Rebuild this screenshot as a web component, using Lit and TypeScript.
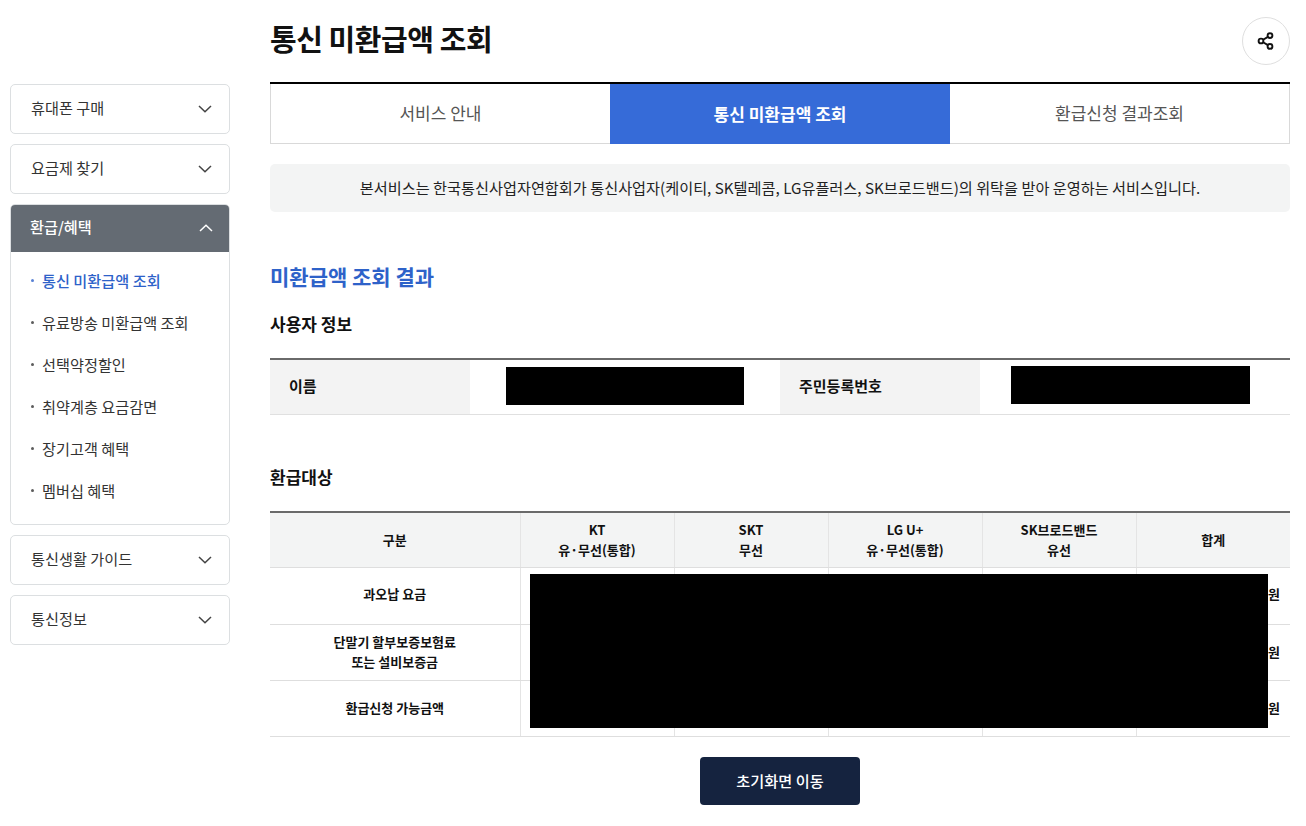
import { LitElement, html, css, svg } from "lit";
import { customElement } from "lit/decorators.js";

const chevron = (up = false) => html`<svg class="chev" width="14" height="8" viewBox="0 0 14 8" fill="none"><path d="${up ? "M1 7L7 1.2L13 7" : "M1 1L7 6.8L13 1"}" stroke="currentColor" stroke-width="1.5"/></svg>`;
const shareIcon = svg`<circle cx="5" cy="10" r="2.4"/><circle cx="14" cy="4.6" r="2.4"/><circle cx="14" cy="15.4" r="2.4"/><path d="M7.1 8.7L11.9 5.9M7.1 11.3L11.9 14.1"/>`;

@customElement("app-root")
export class AppRoot extends LitElement {
  static styles = css`
    :host { display: block; width: 1306px; height: 826px; overflow: hidden; background: #fff; color: #111; font-family: "Noto Sans CJK KR", "Noto Sans", sans-serif; }
    * { box-sizing: border-box; }
    .page { display: flex; align-items: flex-start; padding: 0 16px 0 10px; gap: 40px; }
    .side { width: 220px; flex: none; padding-top: 84px; display: flex; flex-direction: column; gap: 10px; }
    .item { height: 50px; border: 1px solid #dcdfe1; border-radius: 5px; display: flex; align-items: center; justify-content: space-between; padding: 0 17px 0 20px; font-size: 15.2px; color: #333; }
    .label { display: block; line-height: 22px; margin-top: -5px; }
    .chev { display: block; color: #444; }
    .open { border: 1px solid #dcdfe1; border-radius: 5px; height: 321px; overflow: hidden; }
    .open-h { height: 48px; margin: -1px -1px 0; background: #646b73; color: #fff; display: flex; align-items: center; justify-content: space-between; padding: 0 17px 0 20px; font-size: 15.2px; font-weight: 500; border-radius: 5px 5px 0 0; }
    .open-h .chev { color: #fff; }
    .open-h .label { margin-top: -4px; }
    .sub { list-style: none; margin: 0; padding: 7px 0 0 20px; }
    .sub li { height: 42px; display: flex; align-items: center; font-size: 15.2px; color: #333; gap: 8px; }
    .sub li::before { content: ""; width: 3px; height: 3px; border-radius: 50%; background: currentColor; flex: none; opacity: 0.8; }
    .sub li.on { color: #2e62c9; font-weight: 500; }
    .main { width: 1020px; flex: none; position: relative; }
    .head { height: 82px; display: flex; align-items: flex-start; justify-content: space-between; }
    h1 { margin: 17px 0 0; font-size: 29px; line-height: 42px; font-weight: 700; letter-spacing: -0.45px; color: #111; }
    .share { width: 48px; height: 48px; margin-top: 17px; border-radius: 50%; border: 1px solid #dfdfdf; display: flex; align-items: center; justify-content: center; background: #fff; }
    .share svg { fill: none; stroke: #111; stroke-width: 1.9; }
    .tabs { display: grid; grid-template-columns: 340px 340px 340px; height: 62px; border-top: 2px solid #000; }
    .tab { display: flex; align-items: center; justify-content: center; font-size: 17px; color: #555; border-bottom: 1px solid #d9d9d9; padding-bottom: 2px; }
    .tab:first-child { border-left: 1px solid #d9d9d9; }
    .tab:last-child { border-right: 1px solid #d9d9d9; }
    .tab.on { background: #366bd8; color: #fff; font-weight: 700; border-bottom: 0; }
    .notice { margin-top: 20px; height: 48px; background: #f3f4f4; border-radius: 5px; display: flex; align-items: center; justify-content: center; font-size: 15.2px; color: #222; padding-bottom: 2px; }
    h2 { margin: 49px 0 0; font-size: 21px; line-height: 30px; font-weight: 700; color: #2e62c9; }
    h3 { margin: 0; font-size: 17px; line-height: 24px; font-weight: 700; color: #111; }
    .h3a { margin-top: 21px; }
    .info { margin-top: 22px; height: 57px; border-top: 2px solid #6a6a6a; border-bottom: 1px solid #e0e0e0; display: grid; grid-template-columns: 200px 310px 200px 310px; position: relative; }
    .info .k { background: #f3f3f3; display: flex; align-items: center; padding: 0 0 3px 19px; font-size: 15px; font-weight: 700; color: #111; }
    .mask { position: absolute; background: #000; }
    .m1 { left: 236px; top: 7px; width: 238px; height: 38px; }
    .m2 { left: 741px; top: 6px; width: 239px; height: 38px; }
    .m3 { left: 260px; top: 63px; width: 738px; height: 154px; }
    .h3b { margin-top: 50px; }
    .wrap { position: relative; margin-top: 22px; }
    table { width: 1020px; border-collapse: collapse; table-layout: fixed; border-top: 2px solid #6a6a6a; font-size: 13px; color: #111; }
    th, td { border-bottom: 1px solid #dedede; border-left: 1px solid #e4e4e4; text-align: center; padding: 0 0 2px; line-height: 20px; font-weight: 700; }
    th:first-child, td:first-child { border-left: 0; }
    th { height: 55.5px; background: #f3f4f4; padding-bottom: 1px; }
    td { height: 56px; }
    tr.first td { height: 57px; padding-bottom: 4px; }
    td.won { text-align: right; padding-right: 10px; }
    .btnrow { margin-top: 20px; display: flex; justify-content: center; }
    .btn { width: 160px; height: 48px; border-radius: 4px; background: #15233f; color: #fff; font-size: 15.2px; font-weight: 500; display: flex; align-items: center; justify-content: center; padding-bottom: 2px; }
  `;

  render() {
    return html`<div class="page">
      <nav class="side">
        <div class="item"><span class="label">휴대폰 구매</span>${chevron()}</div>
        <div class="item"><span class="label">요금제 찾기</span>${chevron()}</div>
        <div class="open">
          <div class="open-h"><span class="label">환급/혜택</span>${chevron(true)}</div>
          <ul class="sub">
            <li class="on">통신 미환급액 조회</li>
            <li>유료방송 미환급액 조회</li>
            <li>선택약정할인</li>
            <li>취약계층 요금감면</li>
            <li>장기고객 혜택</li>
            <li>멤버십 혜택</li>
          </ul>
        </div>
        <div class="item"><span class="label">통신생활 가이드</span>${chevron()}</div>
        <div class="item"><span class="label">통신정보</span>${chevron()}</div>
      </nav>
      <main class="main">
        <div class="head">
          <h1>통신 미환급액 조회</h1>
          <div class="share"><svg width="20" height="20" viewBox="0 0 20 20">${shareIcon}</svg></div>
        </div>
        <div class="tabs">
          <div class="tab">서비스 안내</div>
          <div class="tab on">통신 미환급액 조회</div>
          <div class="tab">환급신청 결과조회</div>
        </div>
        <div class="notice">본서비스는 한국통신사업자연합회가 통신사업자(케이티, SK텔레콤, LG유플러스, SK브로드밴드)의 위탁을 받아 운영하는 서비스입니다.</div>
        <h2>미환급액 조회 결과</h2>
        <h3 class="h3a">사용자 정보</h3>
        <div class="info">
          <div class="k">이름</div><div></div>
          <div class="k">주민등록번호</div><div></div>
          <div class="mask m1"></div><div class="mask m2"></div>
        </div>
        <h3 class="h3b">환급대상</h3>
        <div class="wrap">
          <table>
            <colgroup><col style="width:250px"/><col style="width:154px"/><col style="width:154px"/><col style="width:154px"/><col style="width:154px"/><col style="width:154px"/></colgroup>
            <tr><th>구분</th><th>KT<br/>유·무선(통합)</th><th>SKT<br/>무선</th><th>LG U+<br/>유·무선(통합)</th><th>SK브로드밴드<br/>유선</th><th>합계</th></tr>
            <tr class="first"><td>과오납 요금</td><td></td><td></td><td></td><td></td><td class="won">원</td></tr>
            <tr><td>단말기 할부보증보험료<br/>또는 설비보증금</td><td></td><td></td><td></td><td></td><td class="won">원</td></tr>
            <tr><td>환급신청 가능금액</td><td></td><td></td><td></td><td></td><td class="won">원</td></tr>
          </table>
          <div class="mask m3"></div>
        </div>
        <div class="btnrow"><div class="btn">초기화면 이동</div></div>
      </main>
    </div>`;
  }
}
